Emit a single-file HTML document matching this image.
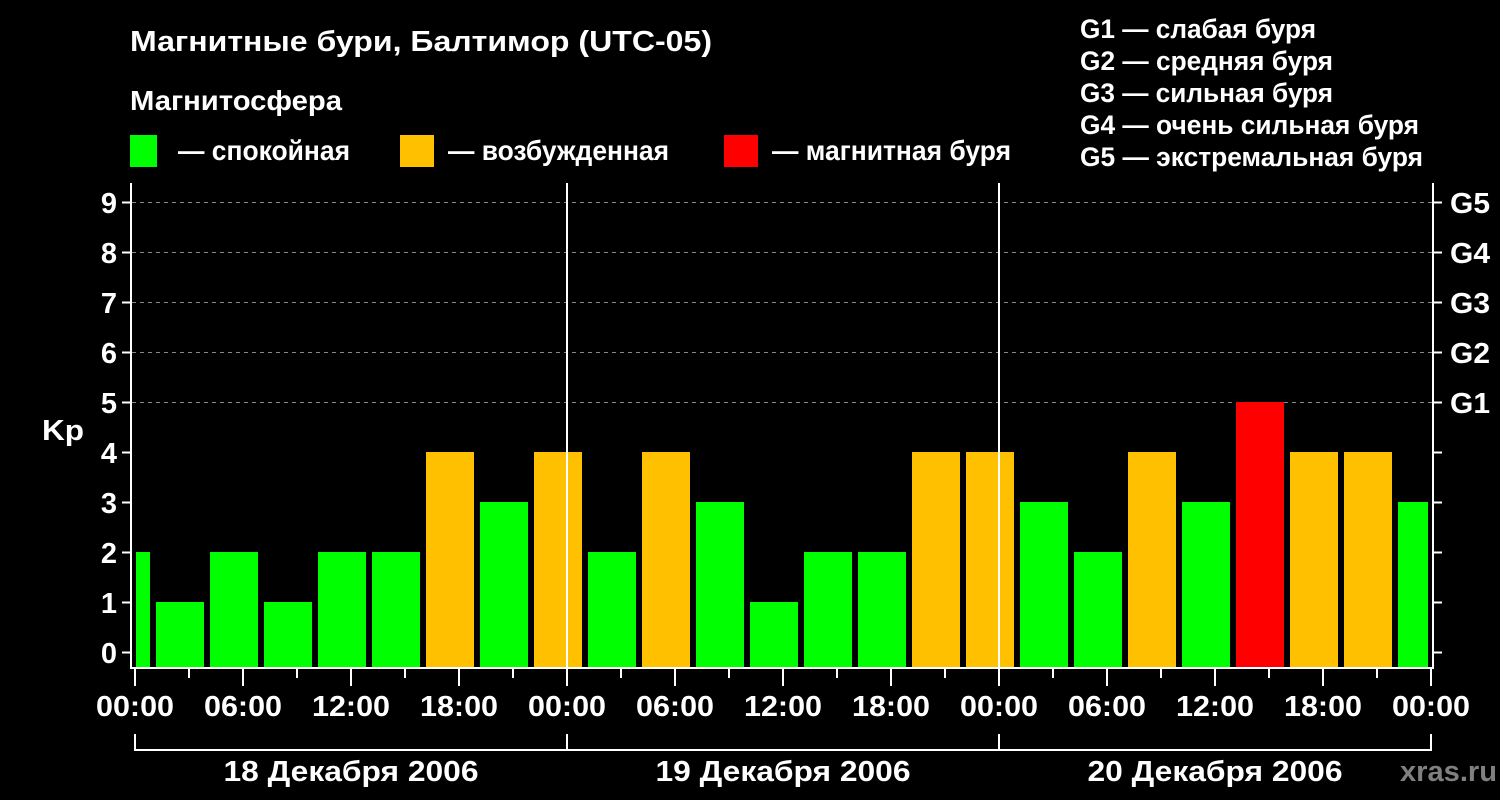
<!DOCTYPE html>
<html><head><meta charset="utf-8"><style>
html,body{margin:0;padding:0;background:#000;width:1500px;height:800px;overflow:hidden}
text{font-family:"Liberation Sans",sans-serif;font-weight:bold;fill:#fff}
</style></head><body>
<svg width="1500" height="800" xmlns="http://www.w3.org/2000/svg">
<text x="130" y="51" font-size="29" textLength="582" lengthAdjust="spacingAndGlyphs">Магнитные бури, Балтимор (UTC-05)</text>
<text x="130" y="110" font-size="28" textLength="212" lengthAdjust="spacingAndGlyphs">Магнитосфера</text>
<rect x="130" y="135" width="27" height="32" fill="#00ff00"/>
<rect x="400" y="135" width="34" height="32" fill="#ffc000"/>
<rect x="724" y="135" width="34" height="32" fill="#ff0000"/>
<g font-size="28">
<text x="178" y="160" textLength="172" lengthAdjust="spacingAndGlyphs">— спокойная</text>
<text x="448" y="160" textLength="221" lengthAdjust="spacingAndGlyphs">— возбужденная</text>
<text x="772" y="160" textLength="239" lengthAdjust="spacingAndGlyphs">— магнитная буря</text>
</g>
<g font-size="27">
<text x="1080" y="38" textLength="236" lengthAdjust="spacingAndGlyphs">G1 — слабая буря</text>
<text x="1080" y="70" textLength="253" lengthAdjust="spacingAndGlyphs">G2 — средняя буря</text>
<text x="1080" y="102" textLength="253" lengthAdjust="spacingAndGlyphs">G3 — сильная буря</text>
<text x="1080" y="134" textLength="339" lengthAdjust="spacingAndGlyphs">G4 — очень сильная буря</text>
<text x="1080" y="166" textLength="343" lengthAdjust="spacingAndGlyphs">G5 — экстремальная буря</text>
</g>
<g stroke="#888" stroke-dasharray="4,4" stroke-width="1">
<line x1="132" y1="202.5" x2="1432" y2="202.5"/>
<line x1="132" y1="252.5" x2="1432" y2="252.5"/>
<line x1="132" y1="302.5" x2="1432" y2="302.5"/>
<line x1="132" y1="352.5" x2="1432" y2="352.5"/>
<line x1="132" y1="402.5" x2="1432" y2="402.5"/>
</g>
<g id="bars"></g>
<g stroke="#fff" stroke-width="2" fill="none">
<polyline points="131,183 131,668 1433,668 1433,183"/>
<line x1="567" y1="183" x2="567" y2="668"/>
<line x1="999" y1="183" x2="999" y2="668"/>
<path d="M135,734V750H1431V734M567,734V750M999,734V750"/>
</g>
<g font-size="29" text-anchor="end">
<text x="117" y="663">0</text><text x="117" y="613">1</text><text x="117" y="563">2</text><text x="117" y="513">3</text><text x="117" y="463">4</text><text x="117" y="413">5</text><text x="117" y="363">6</text><text x="117" y="313">7</text><text x="117" y="263">8</text><text x="117" y="213">9</text>
</g>
<text x="42" y="440" font-size="29" textLength="42" lengthAdjust="spacingAndGlyphs">Kp</text>
<g font-size="29">
<text x="1450" y="413" textLength="40" lengthAdjust="spacingAndGlyphs">G1</text><text x="1450" y="363" textLength="40" lengthAdjust="spacingAndGlyphs">G2</text><text x="1450" y="313" textLength="40" lengthAdjust="spacingAndGlyphs">G3</text><text x="1450" y="263" textLength="40" lengthAdjust="spacingAndGlyphs">G4</text><text x="1450" y="213" textLength="40" lengthAdjust="spacingAndGlyphs">G5</text>
</g>
<g id="tl" font-size="29" text-anchor="middle"></g>
<g font-size="29" text-anchor="middle">
<text x="351" y="781" textLength="255" lengthAdjust="spacingAndGlyphs">18 Декабря 2006</text>
<text x="783" y="781" textLength="255" lengthAdjust="spacingAndGlyphs">19 Декабря 2006</text>
<text x="1215" y="781" textLength="255" lengthAdjust="spacingAndGlyphs">20 Декабря 2006</text>
</g>
<text x="1400" y="781" font-size="29" textLength="97" lengthAdjust="spacingAndGlyphs" style="fill:#808080">xras.ru</text>
<g id="ticks" stroke="#fff" stroke-width="2"></g>
</svg>
<script>
var v=[2,1,2,1,2,2,4,3,4,2,4,3,1,2,2,4,4,3,2,4,3,5,4,4,3];
var b=document.getElementById('bars'),t=document.getElementById('ticks'),s="";
v.forEach(function(k,i){var x=102+54*i,w=48;if(x<136){w-=136-x;x=136}if(x+w>1428)w=1428-x;
var c=k>=5?'#ff0000':k==4?'#ffc000':'#00ff00';var y=652-50*k;
s+='<rect x="'+x+'" y="'+y+'" width="'+w+'" height="'+(668-y)+'" fill="'+c+'"/>';});
b.innerHTML=s;s="";
for(var k=0;k<=9;k++){var y=652-50*k+0.5;s+='<line x1="122" y1="'+y+'" x2="131" y2="'+y+'"/><line x1="1433" y1="'+y+'" x2="1442" y2="'+y+'"/>';}
for(var i=0;i<=24;i++){var x=135+54*i;s+='<line x1="'+x+'" y1="668" x2="'+x+'" y2="'+(i%2?678:686)+'"/>';}
t.innerHTML=s;s="";
var L=["00:00","06:00","12:00","18:00"];
for(var i=0;i<=12;i++){s+='<text x="'+(135+108*i)+'" y="716" textLength="78" lengthAdjust="spacingAndGlyphs">'+L[i%4]+'</text>';}
document.getElementById('tl').innerHTML=s;
</script>
</body></html>
